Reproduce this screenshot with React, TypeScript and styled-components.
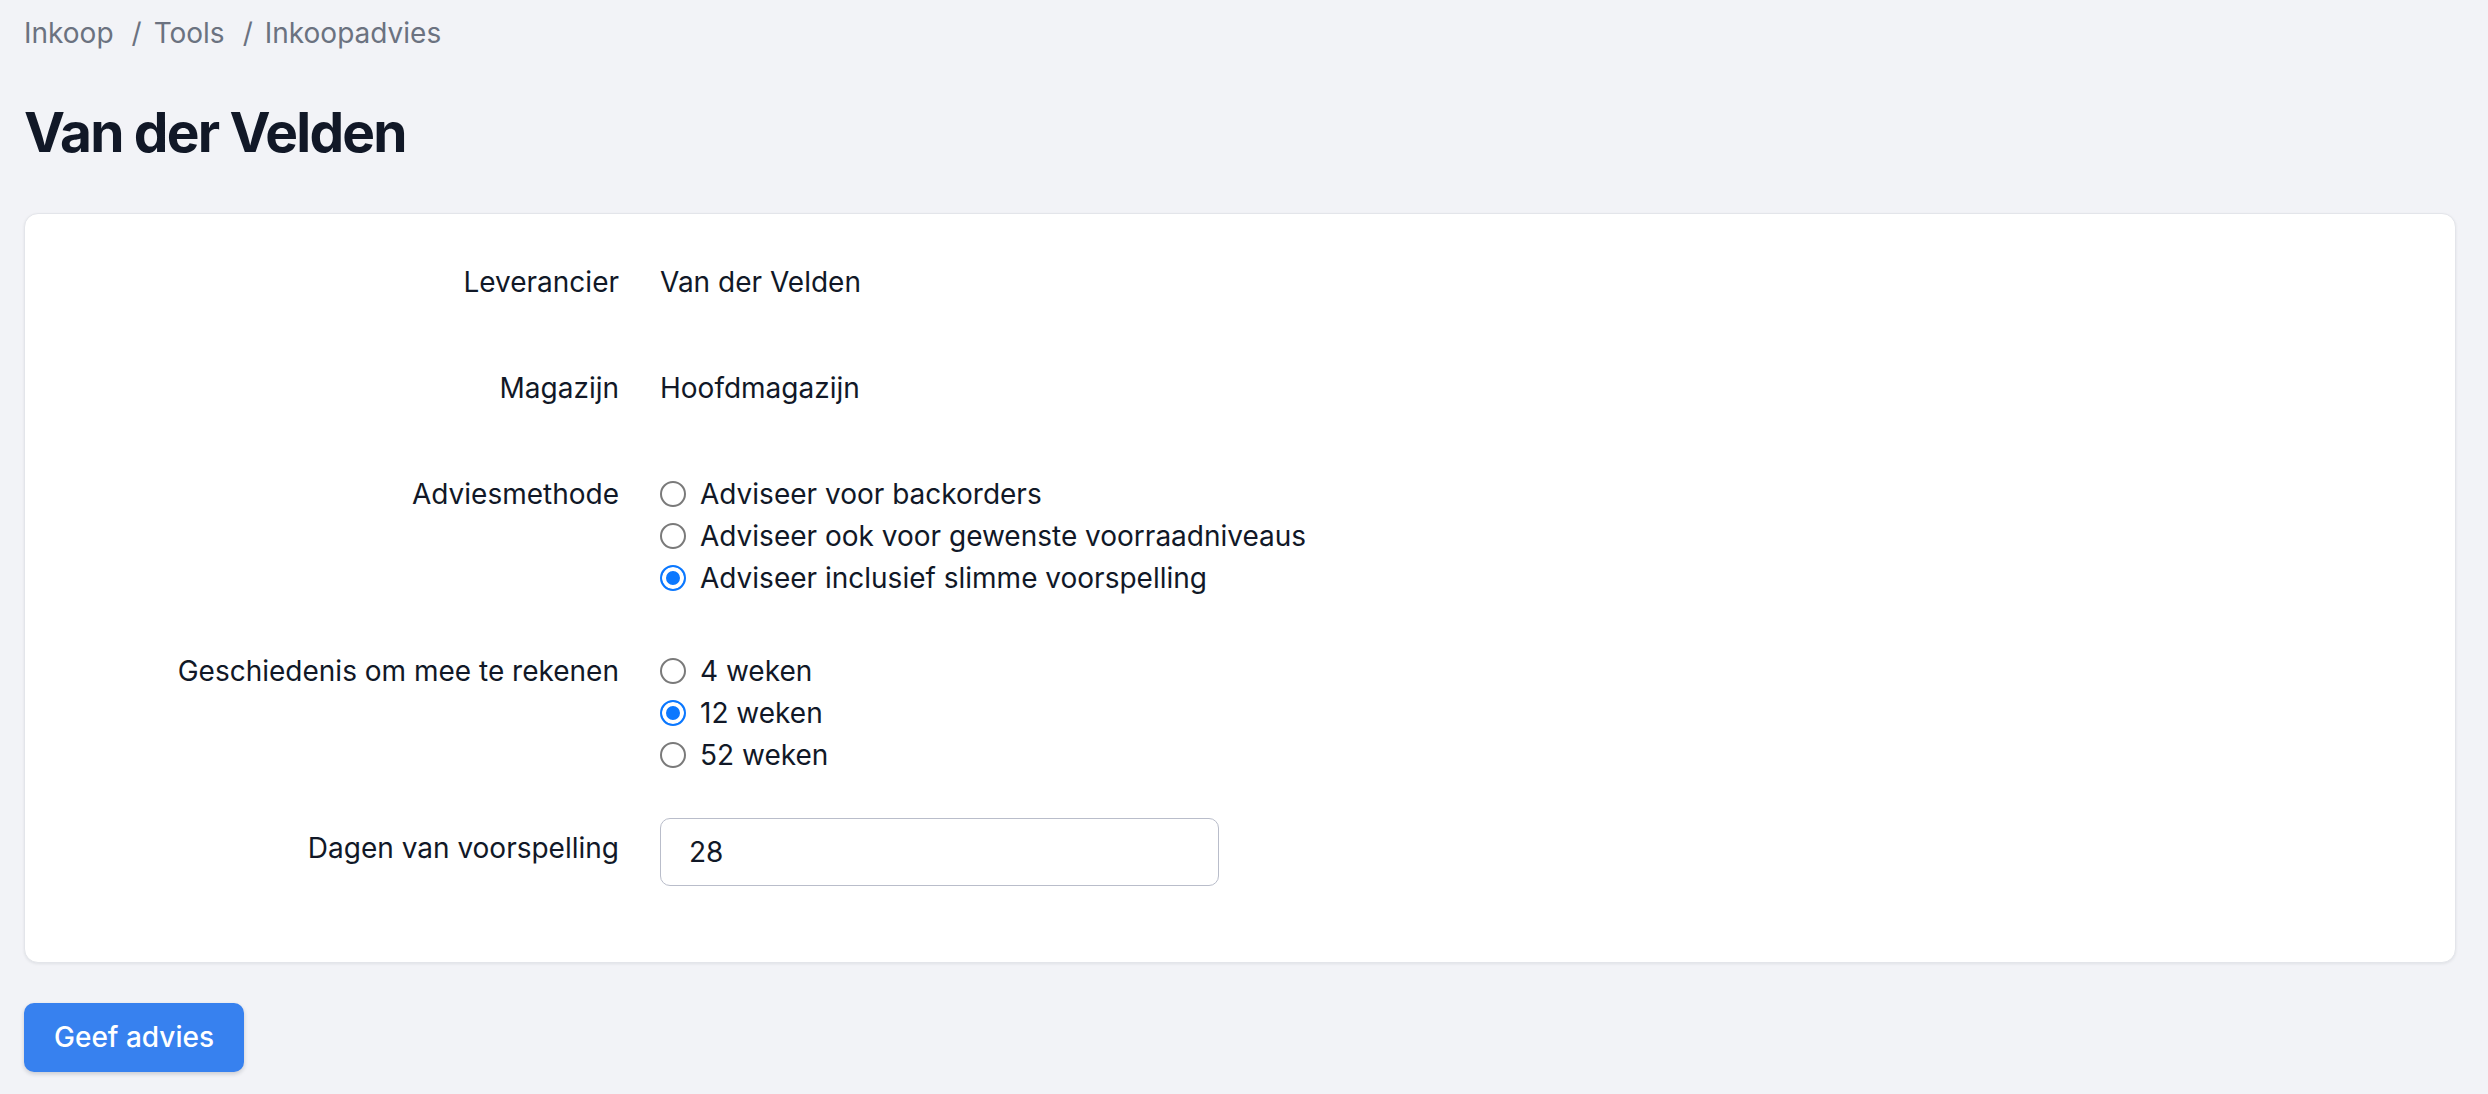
import * as React from "react";
import styled, { createGlobalStyle } from "styled-components";

const GlobalStyle = createGlobalStyle`
  html, body {
    margin: 0;
    padding: 0;
    background: #f2f3f7;
  }

  body {
    font-family: Inter, "Noto Sans", "Liberation Sans", sans-serif;
    color: #111827;
    -webkit-font-smoothing: antialiased;
  }

  * {
    box-sizing: border-box;
  }
`;

const Page = styled.div`
  min-height: 100vh;
  padding: 12px 32px 20px 24px;
`;

const Breadcrumbs = styled.nav`
  display: flex;
  align-items: center;
  font-size: 28px;
  line-height: 42px;
  color: #6b7280;
`;

const Crumb = styled.span`
  white-space: nowrap;
`;

const Separator = styled.span`
  margin: 0 12px 0 18px;
`;

const Title = styled.h1`
  margin: 42px 0 45px;
  font-size: 55px;
  line-height: 72px;
  font-weight: 700;
  letter-spacing: -1.8px;
  color: #111827;
`;

const Card = styled.section`
  display: flex;
  flex-direction: column;
  gap: 42px;
  padding: 38px 38px 76px;
  background: #ffffff;
  border: 1px solid #e3e5ea;
  border-radius: 14px;
  box-shadow: 0 1px 3px rgba(17, 24, 39, 0.08);
`;

const Row = styled.div`
  display: grid;
  grid-template-columns: 556px 1fr;
  column-gap: 41px;
  align-items: start;
`;

const Label = styled.label`
  padding: 9px 0 13px;
  text-align: right;
  font-size: 28px;
  line-height: 42px;
  color: #111827;
`;

const Value = styled.div`
  padding-top: 9px;
  font-size: 28px;
  line-height: 42px;
  color: #111827;
`;

const RadioGroup = styled.div`
  display: flex;
  flex-direction: column;
  padding-top: 9px;
`;

const RadioOption = styled.label`
  display: flex;
  align-items: center;
  gap: 14px;
  font-size: 28px;
  line-height: 42px;
  color: #111827;
  cursor: pointer;
`;

const Radio = styled.input.attrs({ type: "radio" })`
  appearance: none;
  -webkit-appearance: none;
  flex: none;
  width: 26px;
  height: 26px;
  margin: 0;
  border: 2px solid #7a7a7a;
  border-radius: 50%;
  background: #ffffff;
  cursor: pointer;

  &:checked {
    border-color: #0b78ff;
    background: #0b78ff;
    box-shadow: inset 0 0 0 4px #ffffff;
  }
`;

const NumberInput = styled.input`
  width: 559px;
  height: 68px;
  padding: 0 28px;
  border: 1.5px solid #b9bdca;
  border-radius: 10px;
  background: #ffffff;
  font-family: inherit;
  font-size: 28px;
  color: #111827;
  outline: none;

  &:focus {
    border-color: #3b82f6;
  }
`;

const SubmitButton = styled.button`
  margin-top: 40px;
  padding: 13px 30px 14px;
  border: none;
  border-radius: 10px;
  background: #3781ef;
  color: #ffffff;
  font-family: inherit;
  font-size: 28px;
  line-height: 42px;
  font-weight: 500;
  box-shadow: 0 2px 4px rgba(17, 24, 39, 0.18);
  cursor: pointer;
`;

const METHODS = [
  "Adviseer voor backorders",
  "Adviseer ook voor gewenste voorraadniveaus",
  "Adviseer inclusief slimme voorspelling"
];

const HISTORY = ["4 weken", "12 weken", "52 weken"];

export default function App() {
  const [method, setMethod] = React.useState(2);
  const [history, setHistory] = React.useState(1);
  const [days, setDays] = React.useState("28");

  return (
    <Page>
      <GlobalStyle />
      <Breadcrumbs>
        <Crumb>Inkoop</Crumb>
        <Separator>/</Separator>
        <Crumb>Tools</Crumb>
        <Separator>/</Separator>
        <Crumb>Inkoopadvies</Crumb>
      </Breadcrumbs>

      <Title>Van der Velden</Title>

      <Card>
        <Row>
          <Label>Leverancier</Label>
          <Value>Van der Velden</Value>
        </Row>
        <Row>
          <Label>Magazijn</Label>
          <Value>Hoofdmagazijn</Value>
        </Row>
        <Row>
          <Label>Adviesmethode</Label>
          <RadioGroup>
            {METHODS.map((m, i) => (
              <RadioOption key={m}>
                <Radio
                  name="method"
                  checked={method === i}
                  onChange={() => setMethod(i)}
                />
                {m}
              </RadioOption>
            ))}
          </RadioGroup>
        </Row>
        <Row>
          <Label>Geschiedenis om mee te rekenen</Label>
          <RadioGroup>
            {HISTORY.map((h, i) => (
              <RadioOption key={h}>
                <Radio
                  name="history"
                  checked={history === i}
                  onChange={() => setHistory(i)}
                />
                {h}
              </RadioOption>
            ))}
          </RadioGroup>
        </Row>
        <Row>
          <Label htmlFor="days">Dagen van voorspelling</Label>
          <NumberInput
            id="days"
            type="text"
            value={days}
            onChange={e => setDays(e.target.value)}
          />
        </Row>
      </Card>

      <SubmitButton type="button">Geef advies</SubmitButton>
    </Page>
  );
}
